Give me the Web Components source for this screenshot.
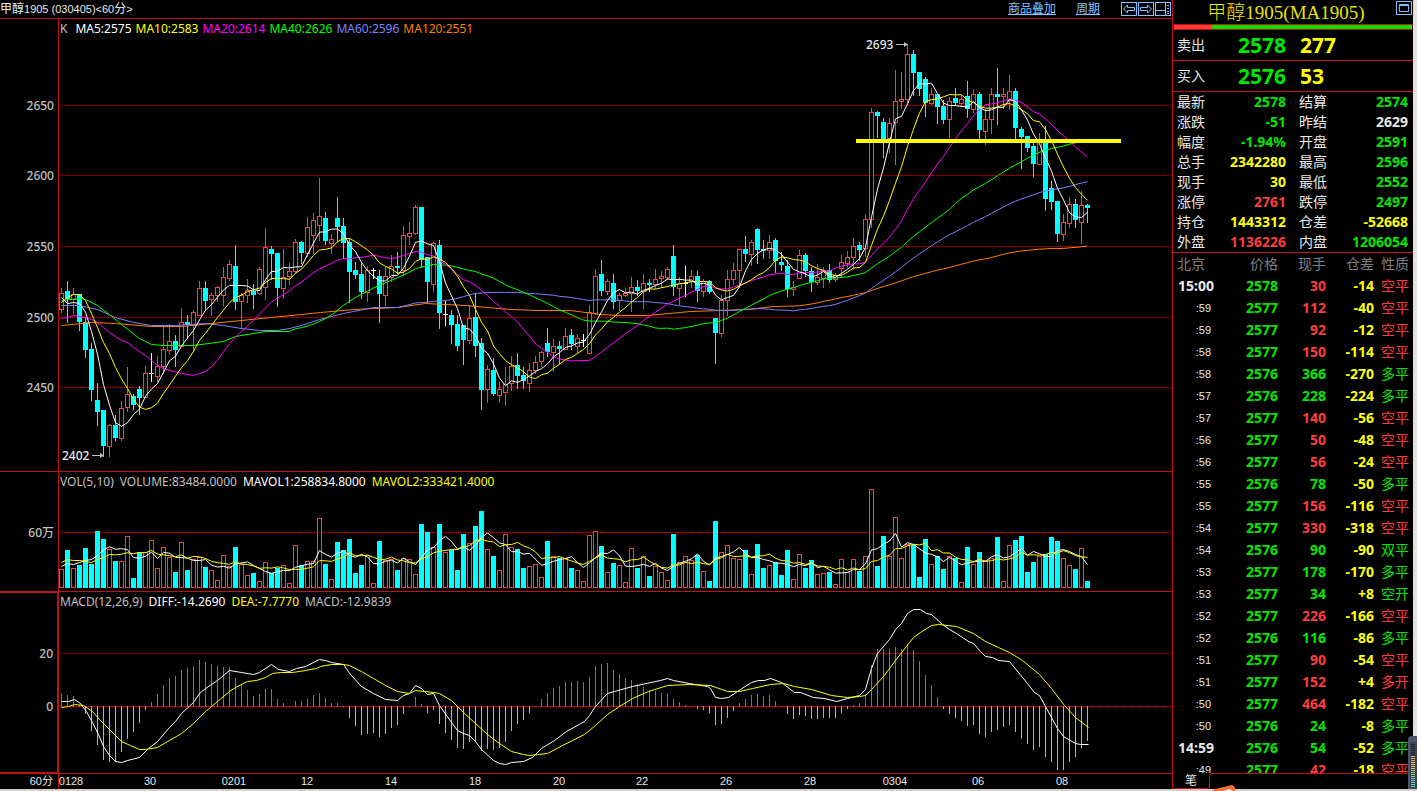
<!DOCTYPE html>
<html lang="zh-CN">
<head>
<meta charset="utf-8">
<title>甲醇1905 60分</title>
<style>
html,body{margin:0;background:#000}
body{font-family:"Noto Sans","Noto Sans CJK SC",sans-serif;font-size:12px;color:#c0c0c0;
--line:#c01010;--up:#ff3c3c;--down:#00ffff;--green:#00e600;--yellow:#ffff00;--link:#80c0ff}
</style>
</head>
<body>
<trade-app></trade-app>
<script>
const mount=(host,html)=>{const r=host.attachShadow({mode:'open'});const t=document.createElement('template');t.innerHTML=html;r.append(t.content.cloneNode(true));return r;};

/* one bar each: kind, high, body top, body bottom, low */
const BARS=`r288,293,309,312 c281,291,299,322 r288,294,299,313 c294,294,322,330 c318,322,350,357 c343,349,390,400 c383,400,412,425 c410,410,446,456 r424,425,446,456 c415,425,438,440
r401,408,438,440 r367,394,407,411 c394,396,405,409 c386,389,398,414 r366,373,397,397 w353,373,373,381 r356,366,376,381 r326,349,366,373 r324,341,350,353 c335,341,350,366
r308,322,346,346 c315,322,325,338 r310,312,325,351 r281,288,315,315 c281,288,301,310 r293,295,299,315 r286,287,295,301 r267,277,295,305 r260,264,278,280 c245,266,302,309
r293,295,301,328 r279,290,295,302 c284,291,295,308 r267,269,293,294 r228,247,287,299 c246,249,254,279 c253,253,288,306 r249,277,288,298 r263,271,276,284 r239,242,271,273
c241,242,253,263 r217,227,253,256 r213,220,235,253 r178,216,225,240 c212,218,241,244 r234,239,243,253 c197,218,227,241 c218,226,243,258 c239,242,272,302 c262,270,275,278
c262,274,292,298 r266,270,292,301 w268,270,270,278 c270,276,294,322 r267,276,295,305 r255,266,277,281 c252,266,268,273 r226,235,270,275 r222,233,236,244 r205,207,233,234
c207,207,260,267 c257,257,282,302 r242,243,284,291 c240,245,313,328 w301,314,314,325 c310,315,325,343 c315,324,346,350 c325,325,340,364 r305,318,340,343 c293,317,346,356
c338,343,390,409 r365,369,389,402 c358,370,394,395 r382,389,395,402 r367,384,392,405 r356,366,383,390 c353,365,376,388 c367,375,381,388 r363,370,383,391 r356,362,370,373
r351,352,361,366 c328,343,352,356 r339,346,352,371 c341,346,349,363 r328,336,349,349 c329,335,344,349 r334,338,346,352 w334,340,340,346 r305,312,353,353 r269,276,313,314
c260,274,291,295 r279,281,291,294 c274,283,302,308 r293,295,300,310 r288,293,295,296 r277,287,293,311 c280,287,291,295 r274,283,291,308 c279,283,285,291 r269,279,284,288
r271,276,278,287 r267,269,277,279 c245,256,287,295 r277,283,288,304 w266,283,283,296 r270,276,281,287 c271,276,291,301 r279,281,291,296 c280,281,292,293 c318,318,333,363
r295,300,333,336 r270,279,300,315 r263,270,279,284 r249,249,270,287 c236,249,254,261 r240,242,254,265 c228,229,250,263 c240,249,251,258 r235,242,250,258 c238,240,261,272
c252,262,265,270 c260,266,289,296 r281,287,289,295 r250,255,278,278 c253,255,271,276 c267,271,282,291 r264,277,282,284 r267,270,278,287 c264,270,280,282 r273,275,279,281
r255,262,268,276 r251,257,263,267 r238,246,257,269 c242,245,250,260 r214,219,248,256 r108,112,219,227 c111,112,116,137 c118,122,140,157 r118,123,138,152 r70,101,122,164
r72,99,101,108 r44,54,99,104 c50,54,73,95 c72,72,89,95 c77,79,103,116 r88,94,103,104 c94,94,107,123 c100,106,120,123 r97,101,119,137 c88,98,103,104
r95,99,103,106 c81,96,109,117 r89,94,109,112 c92,94,130,138 r109,119,131,144 r88,94,119,133 c68,94,97,124 r88,94,96,108 r75,91,100,109 c88,91,128,138
c127,129,137,168 c136,136,148,151 c140,146,164,176 r133,140,164,164 c126,140,199,210 c181,188,202,209 c201,201,234,241 r214,222,234,240 r197,204,223,227 c199,204,220,227
r191,205,222,243 c204,205,208,222`.split(/\s+/).map(s=>({k:s[0],v:s.slice(1).split(',').map(Number)}));
const VOL=`569 550 568 565 548 564 531 539 549 561 561 536 578 552 552 540 568 547 557 572 542 570 559 557 567 570 580 555 566 547 564 575 573 581 562 573 568 565 583 545
565 561 561 518 564 579 542 550 539 573 565 555 583 541 560 559 570 558 559 574 524 532 547 524 552 550 570 534 543 526 511 549 556 570 534 547 549 568 566 564
577 541 556 558 558 568 570 581 535 531 546 572 563 565 582 548 568 556 576 566 572 580 534 562 556 560 555 571 581 521 552 545 558 559 550 574 544 568 565 562
575 550 579 554 568 560 574 573 572 584 559 572 559 571 556 489 566 536 556 517 558 544 545 577 539 564 556 569 556 558 582 547 564 552 560 558 537 581 545 540
536 572 562 556 554 537 541 558 565 569 548 581`.split(/\s+/).map(Number);
const HIST=`693 695 696 705 714 731 745 760 762 762 752 739 732 723 710 702 694 685 678 676 670 668 666 660 662 664 666 667 667 678 685 690 696 694 689 689 699 703 706 701
701 699 695 693 698 703 703 707 718 726 735 734 733 737 734 728 725 714 707 697 704 713 710 724 733 740 748 749 742 742 751 749 750 748 742 731 724 720 713 706
699 693 688 686 682 682 681 682 677 666 664 663 670 674 678 680 684 687 690 691 693 693 699 702 705 706 709 710 713 725 724 718 711 703 699 695 694 696 695 701
706 714 719 715 716 719 719 718 718 718 713 709 705 703 694 665 649 649 649 647 649 644 650 661 675 685 697 709 714 718 721 726 725 734 737 732 730 727 725 732
739 744 750 747 757 762 770 770 762 757 748 741`.split(/\s+/).map(Number);
const DIFF='61,701 68,701 74,699 80,703 86,711 92,722 98,734 103,746 109,755 115,761 121,762 127,760 139,757 148,748 157,741 169,727 175,721 181,713 193,702 199,693 205,688 217,680 229,670 241,672 253,674 259,672 271,664 278,669 289,671 296,668 305,666 319,659 325,660 331,662 343,664 350,674 361,686 373,693 385,699 397,700 403,695 409,693 415,685 421,688 427,694 433,693 439,705 451,722 457,730 463,733 469,735 475,741 481,749 493,760 499,763 505,764 511,762 523,761 532,757 541,748 554,740 566,731 584,721 589,715 595,706 607,693 614,691 632,686 660,680 667,678 673,680 689,683 707,686 710,688 715,697 721,698 728,697 740,689 751,682 758,680 764,680 770,678 781,682 794,692 800,692 813,697 824,698 836,701 847,698 859,695 865,689 871,668 877,653 889,639 895,629 901,623 907,613 913,609 920,609 926,613 931,614 942,624 949,629 956,633 968,641 973,643 980,651 985,656 992,657 998,660 1009,661 1027,683 1034,692 1039,695 1045,706 1057,728 1063,736 1075,743 1080,744 1088,744';
const DEA='61,707 68,706 74,704 83,705 92,711 100,720 110,730 121,741 130,745 139,749 145,749 157,747 169,740 181,733 193,723 205,711 217,701 229,691 235,687 247,681 256,680 265,677 272,673 280,672 292,672 305,670 316,668 320,666 331,664 343,664 349,665 361,671 373,678 385,685 397,691 409,693 415,690 433,692 439,693 451,700 463,712 475,723 487,734 499,743 511,751 523,754 529,755 547,753 562,745 572,740 584,734 595,725 607,714 619,706 632,698 648,691 667,685 689,684 710,685 727,691 739,691 752,688 770,684 783,683 794,686 811,689 831,695 847,697 859,696 865,695 871,689 883,676 895,660 913,637 920,632 931,625 938,624 956,626 973,633 985,641 998,647 1009,652 1022,660 1039,674 1051,688 1064,705 1075,717 1088,727';
const STEP=6,X0=61,px=i=>X0+STEP*i;
const pairs=s=>s.split(' ').map(p=>p.split(',').map(Number));
const path=(pts,c)=>`<polyline fill="none" stroke="${c}" points="${pts.map(([x,y])=>(x+.5)+','+(y+.5).toFixed(1)).join(' ')}"/>`;
/* lead holds the points whose window reaches back before the first bar */
const average=(a,n,lead)=>{const out=lead.slice();for(let i=n-1;i<a.length;i++){let s=0;for(let j=i-n+1;j<=i;j++)s+=a[j];out.push([px(i),s/n]);}return out;};
const leadOf=s=>s.split(' ').map((y,i)=>[px(i),+y]);
const rect=(x,y,w,h,f)=>`<rect x="${x}" y="${y}" width="${w}" height="${h}" fill="${f}"/>`;
const box=(x,y,w,h,c)=>h<2?rect(x,y,w,1,c):`<rect x="${x+.5}" y="${y+.5}" width="${w-1}" height="${h-1}" fill="#000" stroke="${c}"/>`;
const gridline=(y,c='#a00000')=>`<line x1="60" x2="4000" y1="${y+.5}" y2="${y+.5}" stroke="${c}" stroke-dasharray="1 1"/>`;
const UP='#ff3c3c',DN='#00ffff';
const surface=(top,body)=>`<svg aria-hidden="true"><g transform="translate(-59 -${top})">${body}</g></svg>`;

customElements.define('chart-legend',class extends HTMLElement{constructor(){super();mount(this,`<style>:host{display:flex;gap:4px;line-height:16px;white-space:nowrap;padding-left:1px}:host([wide]){gap:6px}::slotted(span){display:block}</style><slot></slot>`)}});

customElements.define('chart-pane',class extends HTMLElement{constructor(){super();mount(this,`<style>
:host{display:grid;grid-template-columns:58px minmax(0,1fr);border-bottom:1px solid var(--line);box-sizing:border-box}
.scale{border-right:1px solid var(--line);margin-right:-1px;position:relative}
:host([active]) .scale{border-right-width:2px;border-top:1px solid var(--line);border-bottom:1px solid var(--line)}
.plot{margin-left:1px;position:relative;overflow:hidden}
.legend{position:absolute;left:0;top:2px}
</style><div class="scale"><slot name="scale"></slot></div><div class="plot"><slot></slot><div class="legend"><slot name="legend"></slot></div></div>`)}});

const svgCss=`:host{display:block;height:100%}svg{display:block;width:100%;height:100%}text{font:500 12px "Noto Sans",sans-serif;fill:#e8e8e8}`;
customElements.define('price-plot',class extends HTMLElement{constructor(){super();
let b=[105,175,246,317,387].map(y=>gridline(y)).join('');
BARS.forEach((d,i)=>{const x=px(i),[h,t,o,l]=d.v,c=d.k=='r'?UP:d.k=='c'?DN:'#ffffff';
 b+=rect(x,h,1,l-h+1,c);
 if(d.k=='r')b+=box(x-2,t,5,o-t+1,c);else if(d.k=='c')b+=rect(x-2,t,5,o-t,c);else b+=rect(x-2,t,5,1,c);});
const close=BARS.map(d=>d.k=='r'?d.v[1]:d.v[2]);
const at=(s,n)=>pairs(s).filter(p=>p[0]<px(n-1));
b+=path(average(close,120,at('61,325 91,322 115,323 151,326 181,326 211,323 241,320 271,317 301,314 320,312 353,309 397,307 425,303 445,304 465,305 487,307 510,309 540,310 570,310 600,314 620,315 647,315 690,311 720,310 747,309 773,306',120)),'#ff8000');
b+=path(average(close,60,at('61,305 79,305 97,309 115,317 133,322 151,325 175,325 205,323 223,325 241,328 259,330 277,330 289,328 301,325 319,319 331,316 343,313 353,311 373,307 398,307',60)),'#8080ff');
b+=path(average(close,40,at('61,300 79,298 85,299 97,305 109,314 121,324 139,338 151,344 163,345 193,345 223,341 235,336 265,331 289,331',40)),'#00ff00');
b+=path(average(close,20,leadOf('318 317 315 316 317 319 322 327 332 336 340 342 347 351 355 360 365 368 370')),'#ff00ff');
b+=path(average(close,10,leadOf('302 297 294 294 300 313 327 342 353')),'#ffff00');
b+=path(average(close,5,leadOf('297 303 302 303')),'#ffffff');
b+=rect(856,139,265,4,'#ffff00');
b+=`<text x="866" y="49">2693</text><text x="62" y="460">2402</text><g fill="#c0c0c0"><path d="M896 44h8v-2l4 2.5l-4 2.5v-2h-8zM92 455h8v-2l4 2.5l-4 2.5v-2h-8z"/></g>`;
mount(this,`<style>${svgCss}</style>${surface(19,b)}`)}});

customElements.define('volume-plot',class extends HTMLElement{constructor(){super();
let b=gridline(532,'#c00000');
VOL.forEach((y,i)=>{const x=px(i)-2;b+=BARS[i].k=='c'?rect(x,y,5,588-y,DN):box(x,y,5,588-y,UP)});
b+=path(average(VOL,5,leadOf('566 563 564 562')),'#ffffff')+path(average(VOL,10,leadOf('562 559 560 560 561 562 559 557 554')),'#ffff00');
mount(this,`<style>${svgCss}</style>${surface(472,b)}`)}});

customElements.define('macd-plot',class extends HTMLElement{constructor(){super();
let b=gridline(653)+gridline(706,'#e00000');
HIST.forEach((y,i)=>{b+=y<=706?rect(px(i),y,1,707-y,UP):rect(px(i),706,1,y-706,DN)});
b+=path(pairs(DIFF),'#ffffff')+path(pairs(DEA),'#ffff00');
mount(this,`<style>${svgCss}</style>${surface(592,b)}`)}});

customElements.define('time-axis',class extends HTMLElement{constructor(){super();
const m=[[71,'0128'],[150,'30'],[234,'0201'],[307,'12'],[391,'14'],[475,'18'],[559,'20'],[642,'22'],[726,'26'],[810,'28'],[895,'0304'],[978,'06'],[1062,'08']];
mount(this,`<style>:host{display:grid;grid-template-columns:58px minmax(0,1fr);height:15px;line-height:15px;color:#e8e8e8;font-family:"Liberation Sans","Noto Sans CJK SC",sans-serif;font-size:11px}
span{border-right:1px solid var(--line);margin-right:-1px;text-align:right;padding-right:5px}svg{display:block;width:100%;height:15px;margin-left:1px}text{fill:#e8e8e8;text-anchor:middle}</style>
<span>60分</span><svg>${m.map(([x,t])=>`<text x="${x-59}" y="11">${t}</text>`).join('')}</svg>`)}});

customElements.define('scale-label',class extends HTMLElement{constructor(){super();mount(this,`<style>:host{position:absolute;right:4px;top:calc(var(--at) * 1px);line-height:16px;font-weight:500}</style><slot></slot>`)}});

customElements.define('chart-toolbar',class extends HTMLElement{constructor(){super();mount(this,`<style>
:host{display:flex;align-items:center;height:18px;border-bottom:1px solid var(--line);color:#e8e8e8;line-height:18px;white-space:nowrap;font-family:"Liberation Sans","Noto Sans CJK SC",sans-serif;font-size:11px}
h1{font:inherit;margin:0;flex:1}b{font-weight:400;font-size:12px}
a{color:var(--link);font-size:12px;line-height:14px;margin-right:20px}a+a{margin-right:21px}
button{all:unset;width:16px;height:16px;margin-right:1px;display:block}svg{display:block}div{display:flex}
</style><h1><b>甲醇</b>1905 (030405)&lt;60<b>分</b>&gt;</h1><a href="#overlay">商品叠加</a><a href="#period">周期</a>
<div><button aria-label="左移"><svg width="16" height="16" fill="none" stroke="#80c0ff"><rect x=".5" y="1.5" width="15" height="13"/><path d="M2.5 8l4-4v2.5h7v3h-7v2.5z"/></svg></button>
<button aria-label="右移"><svg width="16" height="16" fill="none" stroke="#80c0ff"><rect x=".5" y="1.5" width="15" height="13"/><path d="M13.5 8l-4-4v2.5h-7v3h7v2.5z"/></svg></button>
<button aria-label="布局"><svg width="16" height="16" fill="none" stroke="#80c0ff"><rect x=".5" y="1.5" width="15" height="13"/><path d="M.5 9.5h10M10.5 2v12"/><path d="M12 4.5h3M12 7.5h3M12 10.5h3M12 12.5h3" stroke-dasharray="2 1"/></svg></button></div>`)}});

customElements.define('quote-head',class extends HTMLElement{constructor(){super();mount(this,`<style>
:host{display:block}
h2{display:grid;grid-template-columns:1fr auto 1fr;margin:0;height:24px;line-height:26px;color:#e6e600;font-family:"Liberation Serif","Noto Sans CJK SC",serif;font-weight:300;font-size:19px;border-bottom:1px solid var(--line)}
h2 span{grid-column:2;white-space:nowrap;padding-right:14px}
button{all:unset;justify-self:end;width:17px;height:16px}svg{display:block}
.ratio{display:flex;height:4px;margin:0 1px}.ratio i{background:var(--up);flex:38}.ratio i+i{background:var(--green);flex:200}
.line{display:grid;grid-template-columns:60px 53px 1fr;column-gap:0;height:30px;line-height:30px;border-top:1px solid var(--line)}
.line:last-child{border-bottom:1px solid var(--line)}
.line span{padding-left:4px;font-size:14px;color:#e8e8e8;white-space:nowrap}
b{font-size:21px;text-align:right;color:var(--green)}b+b{color:var(--yellow);text-align:left;padding-left:14px}
</style><h2><span>甲醇1905(MA1905)</span><button aria-label="窗口"><svg width="16" height="16" fill="none" stroke="#80c0ff"><rect x=".5" y="1.5" width="15" height="13"/><path d="M3.5 4.5h9v7h-9zM3 5.5h10"/></svg></button></h2>
<div class="ratio"><i></i><i></i></div>
<div class="line"><span>卖出</span><b>2578</b><b>277</b></div><div class="line"><span>买入</span><b>2576</b><b>53</b></div>`)}});

customElements.define('quote-grid',class extends HTMLElement{constructor(){super();
const q=[['最新','2578','g','结算','2574','g'],['涨跌','-51','g','昨结','2629','w'],['幅度','-1.94%','g','开盘','2591','g'],['总手','2342280','y','最高','2596','g'],['现手','30','y','最低','2552','g'],['涨停','2761','r','跌停','2497','g'],['持仓','1443312','y','仓差','-52668','y'],['外盘','1136226','r','内盘','1206054','g']];
mount(this,`<style>:host{display:block;border-bottom:1px solid var(--line);padding:0 5px 0 4px;font-size:14px}
table{border-collapse:collapse;table-layout:fixed;width:100%}td,th{padding:0;height:20px;line-height:20px;white-space:nowrap}
th{text-align:left;font-weight:400;color:#e8e8e8}td{text-align:right;font-weight:700}.g{color:var(--green)}.w{color:#e8e8e8}.y{color:var(--yellow)}.r{color:var(--up)}
col.l{width:36px}col.v{width:73px}th+td+th{padding-left:13px}col.m{width:49px}</style>
<table><colgroup><col class="l"><col class="v"><col class="m"><col></colgroup><tbody>${q.map(r=>`<tr><th scope="row">${r[0]}</th><td class="${r[2]}">${r[1]}</td><th scope="row">${r[3]}</th><td class="${r[5]}">${r[4]}</td></tr>`).join('')}</tbody></table>`)}});

customElements.define('tick-list',class extends HTMLElement{constructor(){super();
const t=`15:00 2578 30 -14 空平 r|:59 2577 112 -40 空平 r|:59 2577 92 -12 空平 r|:58 2577 150 -114 空平 r|:58 2576 366 -270 多平 g|:57 2576 228 -224 多平 g|:57 2577 140 -56 空平 r|:56 2577 50 -48 空平 r|:56 2577 56 -24 空平 r|:55 2576 78 -50 多平 g|:55 2577 156 -116 空平 r|:54 2577 330 -318 空平 r|:54 2576 90 -90 双平 g|:53 2577 178 -170 多平 g|:53 2577 34 +8 空开 g|:52 2577 226 -166 空平 r|:52 2576 116 -86 多平 g|:51 2577 90 -54 空平 r|:51 2577 152 +4 多开 r|:50 2577 464 -182 空平 r|:50 2576 24 -8 多平 g|14:59 2576 54 -52 多平 g|:49 2577 42 -18 空平 r`.split('|').map(s=>s.split(' '));
mount(this,`<style>:host{display:block;font-size:14px;overflow:hidden}
table{border-collapse:collapse;table-layout:fixed;width:100%}td,th{padding:0;height:22px;line-height:22px;text-align:right;white-space:nowrap;font-weight:700}
thead th{font-weight:400;color:#808080}thead th:first-child{text-align:left;padding-left:4px}
.t{color:#e8e8e8}.s{font:400 11px/22px "Liberation Sans",sans-serif;padding-right:3px}.p{color:var(--green)}.d{color:var(--yellow)}.r{color:var(--up)}.g{color:var(--green)}.k{font-weight:400;padding-right:4px}thead .k{color:#808080}
</style><table><colgroup><col style="width:41px"><col style="width:64px"><col style="width:48px"><col style="width:48px"><col></colgroup><thead><tr><th>北京</th><th>价格</th><th>现手</th><th>仓差</th><th class="k">性质</th></tr></thead>
<tbody>${t.map(r=>`<tr><td class="t ${r[0][0]==':'?'s':''}">${r[0]}</td><td class="p">${r[1]}</td><td class="${r[5]}">${r[2]}</td><td class="d">${r[3]}</td><td class="k ${r[5]}">${r[4]}</td></tr>`).join('')}</tbody></table>`)}});

customElements.define('quote-tabs',class extends HTMLElement{constructor(){super();mount(this,`<style>
:host{display:grid;grid-template-columns:36px 1fr;height:16px;color:#e8e8e8}
button{all:unset;box-sizing:border-box;font-size:12px;line-height:15px;text-align:center;border:solid var(--line);border-width:0 0 1px;border-radius:0 0 3px 3px}
i{border:solid var(--line);border-width:1px 0 0 1px;border-radius:3px 0 0 0}
</style><button>笔</button><i></i>`)}});

customElements.define('dock-widget',class extends HTMLElement{constructor(){super();
let s='';for(let i=0;i<22;i++){const c=i<6?'#22262e':i<9?'#e8a040':i<13?'#d8d060':i<17?'#90d878':'#60d8c8';s+=rect(3,8+i*2,4,1,c)}
mount(this,`<style>:host{position:absolute;right:0;bottom:0;width:9px;height:53px}svg{display:block}</style><svg width="9" height="53"><path d="M0 4Q0 0 4 0H9V53H0z" fill="#4c5468"/><path d="M2 6h7v47H2z" fill="#3c4254"/>${s}</svg>`)}});
customElements.define('corner-badge',class extends HTMLElement{constructor(){super();mount(this,`<style>:host{position:absolute;right:180px;bottom:-2px;width:25px;height:6px}svg{display:block}</style><svg width="25" height="6"><path d="M0 6L3 4L20 0L23 2V6z" fill="#f07038"/><path d="M11 6L18 4L20 6z" fill="#fff"/></svg>`)}});

customElements.define('trade-app',class extends HTMLElement{constructor(){super();mount(this,`<style>
:host{display:grid;grid-template-columns:minmax(0,1fr) 245px;min-height:100vh;position:relative;box-sizing:border-box;border-bottom:2px solid #d4d0c8}
main{display:grid;grid-template-rows:auto minmax(453px,1fr) 120px 182px auto;min-width:0}
aside{display:flex;flex-direction:column;border-left:1px solid var(--line);border-right:4px solid #e4e1dc;height:100%;box-sizing:border-box;overflow:hidden}
tick-list{flex:1 1 0}
.w{color:#fff}.y{color:#ff0}.m{color:#f0f}.g{color:#0f0}.b{color:#8080ff}.o{color:#ff8000}.k{margin-right:4px}
</style>
<main><chart-toolbar></chart-toolbar>
<chart-pane><scale-label slot="scale" style="--at:79">2650</scale-label><scale-label slot="scale" style="--at:149">2600</scale-label><scale-label slot="scale" style="--at:220">2550</scale-label><scale-label slot="scale" style="--at:291">2500</scale-label><scale-label slot="scale" style="--at:361">2450</scale-label>
<price-plot></price-plot><chart-legend slot="legend"><span class="k">K</span><span class="w">MA5:2575</span><span class="y">MA10:2583</span><span class="m">MA20:2614</span><span class="g">MA40:2626</span><span class="b">MA60:2596</span><span class="o">MA120:2551</span></chart-legend></chart-pane>
<chart-pane><scale-label slot="scale" style="--at:53">60万</scale-label><volume-plot></volume-plot><chart-legend wide slot="legend"><span>VOL(5,10)</span><span>VOLUME:83484.0000</span><span class="w">MAVOL1:258834.8000</span><span class="y">MAVOL2:333421.4000</span></chart-legend></chart-pane>
<chart-pane active><scale-label slot="scale" style="--at:53">20</scale-label><scale-label slot="scale" style="--at:106">0</scale-label><macd-plot></macd-plot><chart-legend wide slot="legend"><span>MACD(12,26,9)</span><span class="w">DIFF:-14.2690</span><span class="y">DEA:-7.7770</span><span>MACD:-12.9839</span></chart-legend></chart-pane>
<time-axis></time-axis></main>
<aside><quote-head></quote-head><quote-grid></quote-grid><tick-list></tick-list><quote-tabs></quote-tabs></aside>
<dock-widget></dock-widget><corner-badge></corner-badge>`)}});
</script>
</body>
</html>
